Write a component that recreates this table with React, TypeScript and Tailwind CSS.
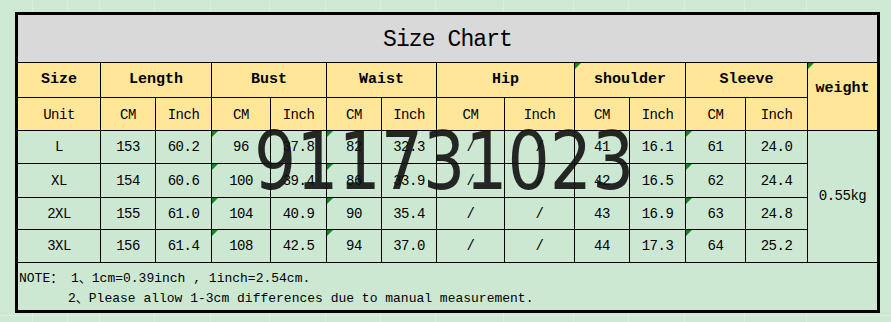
const mono = "font-['Liberation_Mono','Noto_Sans_CJK_SC',monospace]";

const groups = ["Length", "Bust", "Waist", "Hip", "shoulder", "Sleeve"];

const rows = [
  ["L", "153", "60.2", "96", "37.8", "82", "32.3", "/", "/", "41", "16.1", "61", "24.0"],
  ["XL", "154", "60.6", "100", "39.4", "86", "33.9", "/", "/", "42", "16.5", "62", "24.4"],
  ["2XL", "155", "61.0", "104", "40.9", "90", "35.4", "/", "/", "43", "16.9", "63", "24.8"],
  ["3XL", "156", "61.4", "108", "42.5", "94", "37.0", "/", "/", "44", "17.3", "64", "25.2"],
];

// cells with the little green corner mark
const marked = [3, 5, 11];

function Mark() {
  return (
    <span className="absolute left-0 top-0 w-0 h-0 border-t-[6px] border-r-[6px] border-t-[#168a16] border-r-transparent" />
  );
}

export default function App() {
  return (
    <div className={`relative w-[891px] h-[322px] overflow-hidden bg-[#cde8d3] pt-[12px] pl-[15px] ${mono} text-black`}>
      {/* faint sheet gridlines behind the table */}
      <div className="absolute inset-0 flex pointer-events-none">
        <div className="w-[33px] border-r border-white/25" />
        <div className="w-[35px] border-r border-white/25" />
        <div className="w-[32px] border-r border-white/25" />
        <div className="w-[55px] border-r border-white/25" />
        <div className="w-[56px] border-r border-white/25" />
        <div className="w-[59px] border-r border-white/25" />
        <div className="w-[56px] border-r border-white/25" />
        <div className="w-[55px] border-r border-white/25" />
        <div className="w-[55px] border-r border-white/25" />
        <div className="w-[68px] border-r border-white/25" />
        <div className="w-[70px] border-r border-white/25" />
        <div className="w-[55px] border-r border-white/25" />
        <div className="w-[56px] border-r border-white/25" />
        <div className="w-[60px] border-r border-white/25" />
        <div className="w-[62px] border-r border-white/25" />
      </div>
      <div className="absolute left-0 right-0 top-[315px] h-px bg-white/25" />

      <div className="relative w-[865px] border-[3px] border-black bg-black grid gap-px grid-cols-[82px_54px_55px_58px_55px_54px_54px_67px_69px_54px_55px_59px_61px_69px] grid-rows-[47px_34px_32px_32px_33px_31px_32px_47px]">
        {/* Title */}
        <div className="col-span-14 bg-[#d9d9d9] flex items-center justify-center text-[23px] tracking-[-0.9px] pt-[4px]">
          Size Chart
        </div>

        {/* Header row 1 */}
        <div className="bg-[#ffe699] flex items-center justify-center text-[15px] font-bold">Size</div>
        {groups.map((g) => (
          <div key={g} className="relative col-span-2 bg-[#ffe699] flex items-center justify-center text-[15px] font-bold">
            {g === "shoulder" && <Mark />}
            {g}
          </div>
        ))}
        <div className="relative row-span-2 bg-[#ffe699] flex items-start justify-center pt-[17px] text-[15px] leading-[18px] font-bold">
          <Mark />
          weight
        </div>

        {/* Header row 2 */}
        <div className="bg-[#ffe699] flex items-center justify-center text-[14px] tracking-[-0.5px] pt-[2px]">Unit</div>
        {groups.map((g) => [
          <div key={g + "cm"} className="bg-[#ffe699] flex items-center justify-center text-[14px] tracking-[-0.5px] pt-[2px]">CM</div>,
          <div key={g + "in"} className="bg-[#ffe699] flex items-center justify-center text-[14px] tracking-[-0.5px] pt-[2px]">Inch</div>,
        ])}

        {/* Data rows */}
        {rows.map((r, ri) => [
          ...r.map((v, ci) => (
            <div key={ri + "-" + ci} className="relative bg-[#cce8d2] flex items-center justify-center text-[14px] tracking-[-0.5px] pt-px">
              {marked.includes(ci) && <Mark />}
              {v}
            </div>
          )),
          ri === 0 ? (
            <div key="weight" className="row-span-4 bg-[#cce8d2] flex items-center justify-center text-[14px] tracking-[-0.5px]">
              0.55kg
            </div>
          ) : null,
        ])}

        {/* Note */}
        <div className="col-span-14 bg-[#cce8d2] pt-[6px] pl-px text-[13px] leading-[20px] whitespace-pre">
          <div>NOTE： 1、1cm=0.39inch , 1inch=2.54cm.</div>
          <div className="pl-[49px]">2、Please allow 1-3cm differences due to manual measurement.</div>
        </div>
      </div>

      {/* Watermark */}
      <div className="absolute left-[254px] top-[122px] origin-left scale-x-83 font-['DejaVu_Sans',sans-serif] text-[80px] leading-none text-[#111]/90 pointer-events-none">
        911731023
      </div>
    </div>
  );
}
